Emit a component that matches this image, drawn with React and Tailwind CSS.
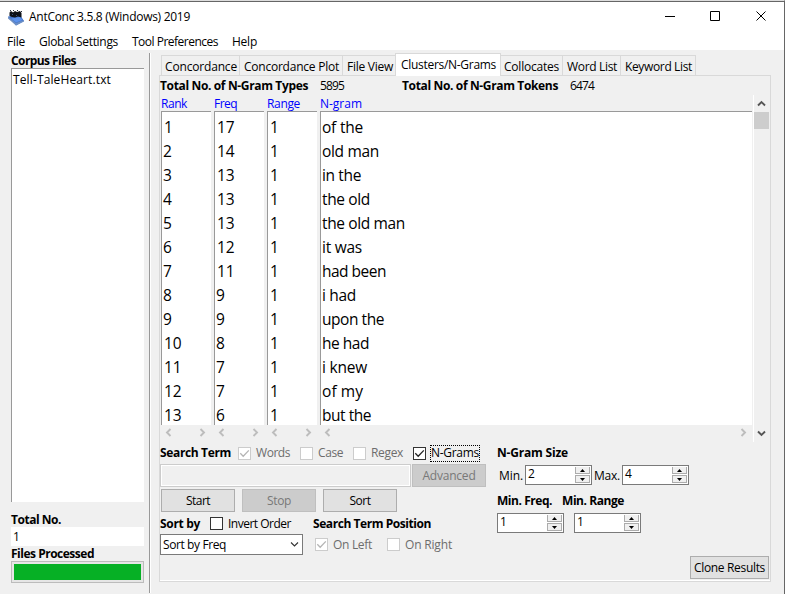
import { useLayoutEffect, useRef, useState } from "react";
import clsx from "clsx";

// Text run that spreads its tracking so that it fills exactly w pixels.
function Text({ w, children, className }) {
  const ref = useRef(null);
  const [tracking, setTracking] = useState(0);
  useLayoutEffect(() => {
    const natural = ref.current.getBoundingClientRect().width;
    setTracking((w - natural) / String(children).length);
  }, []);
  return (
    <span className={clsx("block shrink-0 whitespace-pre", className)} style={{ width: w }}>
      <span ref={ref} className="inline-block" style={{ letterSpacing: tracking }}>
        {children}
      </span>
    </span>
  );
}

function Checkbox({ checked, disabled, className }) {
  return (
    <span
      className={clsx(
        "block h-[13px] w-[13px] shrink-0 border bg-white",
        disabled ? "border-[#cccccc] text-[#b4b4b4]" : "border-[#333333] text-[#222222]",
        className
      )}
    >
      {checked && (
        <svg viewBox="0 0 11 11" className="block h-[11px] w-[11px]" fill="none" stroke="currentColor" strokeWidth="1.3">
          <path d="M1.3 5.3 4.2 8.2 9.8 2.4" />
        </svg>
      )}
    </span>
  );
}

function Button({ children, w, disabled, className }) {
  return (
    <button
      className={clsx(
        "flex h-[23px] shrink-0 items-center justify-center border",
        disabled ? "border-[#bfbfbf] bg-[#cccccc] text-[#787878]" : "border-[#adadad] bg-[#e1e1e1] text-black",
        className
      )}
    >
      <Text w={w}>{children}</Text>
    </button>
  );
}

function Arrow({ up }) {
  return (
    <span className="flex h-[7px] w-[15px] items-center justify-center border border-t-0 border-[#acacac] bg-[#f0f0f0]">
      <svg viewBox="0 0 5 3" className="block h-[3px] w-[5px]">
        <path d={up ? "M0 3 2.5 0 5 3Z" : "M0 0 2.5 3 5 0Z"} fill="#000" />
      </svg>
    </span>
  );
}

function Spinner({ value, className }) {
  return (
    <div className={clsx("flex h-5 w-[67px] shrink-0 justify-between border border-[#7a7a7a] bg-white pl-[2px] pr-px", className)}>
      <span className="leading-4">{value}</span>
      <div className="flex flex-col gap-px pt-px">
        <Arrow up />
        <span className="block border-t border-[#acacac]">
          <Arrow />
        </span>
      </div>
    </div>
  );
}

const chevrons = {
  left: "M6.5 1 3 4.5 6.5 8",
  right: "M2.5 1 6 4.5 2.5 8",
  up: "M1 6.5 4.5 3 8 6.5",
  down: "M1 2.5 4.5 6 8 2.5",
};

function Chevron({ dir, thin, className }) {
  return (
    <svg viewBox="0 0 9 9" className={clsx("block h-[9px] w-[9px] shrink-0", className)} fill="none" stroke="currentColor" strokeWidth={thin ? 1.1 : 1.9}>
      <path d={chevrons[dir]} />
    </svg>
  );
}

const rows = [
  [17, "of the", 41], [14, "old man", 57], [13, "in the", 39], [13, "the old", 48],
  [13, "the old man", 83], [12, "it was", 40], [11, "had been", 64], [9, "i had", 34],
  [9, "upon the", 62], [8, "he had", 47], [7, "i knew", 45], [7, "of my", 41], [6, "but the", 49],
];

function Column({ title, titleW, className, children }) {
  return (
    <div className={clsx("flex shrink-0 flex-col", className)}>
      <Text w={titleW} className="h-4 pt-px leading-4 text-[#0000ff]">{title}</Text>
      <div className="h-[314px] border-l border-t border-[#999999] bg-white pl-px pt-[3px] text-[15.5px] leading-6">
        {children}
      </div>
      <div className="flex h-4 items-center justify-between pb-px pl-[3px] pr-1 text-[#bdbdbd]">
        <Chevron dir="left" />
        <Chevron dir="right" />
      </div>
    </div>
  );
}

function Num({ n }) {
  const s = String(n);
  return <Text w={s.length * 8.8} className={s[0] === "1" ? "pl-px" : ""}>{s}</Text>;
}

function AppIcon() {
  return (
    <svg viewBox="0 0 17 17" className="block h-[17px] w-[17px]">
      <path d="M1 7.5 13 6 17 12 9 16.5Z" fill="#3f73cc" />
      <path d="M1 7.5 9 14 17 11V12.5L9 16.5 1 9.5Z" fill="#6d8fc4" />
      <path d="M4 9.5 13 8 15.5 11 9 13.5Z" fill="#5d92ea" />
      <path d="M2.5 3.5 4 2 6 3.5 8 2 10 3 13 2 14.5 4V8.5L11 7.5 8 8.5 5 8 2.5 7Z" fill="#0d1118" />
      <path d="M3 1h1v1H3zM6 1h1v1H6zM10 1h1v1h-1zM14 2h1v1h-1z" fill="#27303d" />
      <path d="M5 5h1v1H5zM9 6h1v1H9z" fill="#3d5078" />
    </svg>
  );
}

function TitleBar() {
  return (
    <header className="h-12 shrink-0 bg-white">
      <div className="flex h-[30px] items-center pl-[7px]">
        <AppIcon />
        <Text w={161} className="ml-[5px]">AntConc 3.5.8 (Windows) 2019</Text>
        <svg viewBox="0 0 102 11" className="ml-[475px] block h-[11px] w-[102px] -translate-y-px" fill="none" stroke="#000">
          <path d="M0 5.5H10M45.5.5H54.5V9.5H45.5ZM91.5.5 100.5 9.5M100.5.5 91.5 9.5" />
        </svg>
      </div>
      <nav className="flex h-[18px] items-center pl-[7px] pt-px">
        <Text w={18}>File</Text>
        <Text w={79} className="ml-[14px]">Global Settings</Text>
        <Text w={86} className="ml-[14px]">Tool Preferences</Text>
        <Text w={25} className="ml-[14px]">Help</Text>
      </nav>
    </header>
  );
}

function Sidebar() {
  return (
    <aside className="flex w-[149px] shrink-0 flex-col pl-[11px] pr-[5px]">
      <Text w={65} className="mt-[3px] h-[15px] font-bold leading-4">Corpus Files</Text>
      <div className="h-[434px] border-l border-t border-[#999999] bg-white pl-px pt-[3px]">
        <Text w={98}>Tell-TaleHeart.txt</Text>
      </div>
      <Text w={50} className="mt-[10px] h-[15px] font-bold">Total No.</Text>
      <div className="h-[19px] bg-white pl-[2px] leading-[19px]">1</div>
      <Text w={83} className="h-[15px] font-bold leading-[15px]">Files Processed</Text>
      <div className="h-[22px] border border-[#bcbcbc] bg-[#e6e6e6] p-[2px]">
        <div className="h-4 bg-[#06b025]" />
      </div>
    </aside>
  );
}

const tabs = [
  ["Concordance", 72, "w-[78px] pl-[3px]"],
  ["Concordance Plot", 95, "w-[103px] pl-1"],
  ["File View", 46, "w-[53px] pl-1"],
  ["Clusters/N-Grams", 95, "w-[106px] pl-[5px]"],
  ["Collocates", 55, "w-[61px] pl-[3px]"],
  ["Word List", 50, "w-[58px] pl-1"],
  ["Keyword List", 67, "w-[76px] pl-1 border-r"],
];

function Tabs() {
  return (
    <div className="flex h-[22px] items-end pl-[2px]">
      {tabs.map(([name, w, cls]) =>
        name === "Clusters/N-Grams" ? (
          <div key={name} className={clsx("z-10 -mb-px h-[23px] shrink-0 border-x border-t border-[#d9d9d9] bg-white leading-[22px]", cls)}>
            <Text w={w}>{name}</Text>
          </div>
        ) : (
          <div key={name} className={clsx("h-5 shrink-0 border-t border-[#d9d9d9] leading-[21px]", cls, name !== "Collocates" && "border-l")}>
            <Text w={w}>{name}</Text>
          </div>
        )
      )}
    </div>
  );
}

function Results() {
  return (
    <>
      <div className="flex h-[19px] items-center">
        <Text w={148} className="font-bold">Total No. of N-Gram Types</Text>
        <Text w={24} className="ml-3">5895</Text>
        <Text w={156} className="ml-[58px] font-bold">Total No. of N-Gram Tokens</Text>
        <Text w={24} className="ml-3">6474</Text>
      </div>
      <div className="flex h-[347px] pl-px">
        <Column title="Rank" titleW={26} className="mr-[3px] w-[50px]">
          {rows.map((_, i) => <Num key={i} n={i + 1} />)}
        </Column>
        <Column title="Freq" titleW={23} className="mr-[3px] w-[50px]">
          {rows.map((r, i) => <Num key={i} n={r[0]} />)}
        </Column>
        <Column title="Range" titleW={33} className="mr-[3px] w-[50px]">
          {rows.map((_, i) => <Num key={i} n={1} />)}
        </Column>
        <Column title="N-gram" titleW={42} className="w-[432px]">
          {rows.map((r, i) => <Text key={i} w={r[2]}>{r[1]}</Text>)}
        </Column>
        <div className="ml-px flex w-4 flex-col items-center border-l border-white text-[#555555]">
          <Chevron dir="up" className="mt-1" />
          <div className="mt-1 h-[17px] w-[15px] bg-[#cdcdcd]" />
          <Chevron dir="down" className="mb-1 mt-auto" />
        </div>
      </div>
    </>
  );
}

function LeftControls() {
  return (
    <div className="w-[326px] shrink-0">
      <div className="flex h-[22px] items-center">
        <Text w={71} className="font-bold">Search Term</Text>
        <Checkbox checked disabled className="ml-[7px]" />
        <Text w={34} className="ml-[5px] text-[#6d6d6d]">Words</Text>
        <Checkbox disabled className="ml-[10px]" />
        <Text w={25} className="ml-[5px] text-[#6d6d6d]">Case</Text>
        <Checkbox disabled className="ml-[10px]" />
        <Text w={32} className="ml-[5px] text-[#6d6d6d]">Regex</Text>
        <Checkbox checked className="ml-[10px]" />
        <span className="ml-1 flex h-[17px] w-[50px] items-center border border-dotted border-black">
          <Text w={48}>N-Grams</Text>
        </span>
      </div>
      <div className="flex">
        <div className="mr-px h-[23px] w-[251px] border border-[#cccccc] bg-[#f0f0f0] ring-1 ring-inset ring-white" />
        <Button w={53} disabled className="w-[74px]">Advanced</Button>
      </div>
      <div className="mt-[2px] flex gap-[7px] pl-px">
        <Button w={24} className="w-[74px]">Start</Button>
        <Button w={24} disabled className="w-[74px]">Stop</Button>
        <Button w={21} className="w-[74px]">Sort</Button>
      </div>
      <div className="flex h-[22px] items-center pt-px">
        <Text w={40} className="font-bold">Sort by</Text>
        <Checkbox className="ml-[10px]" />
        <Text w={63} className="ml-[5px]">Invert Order</Text>
        <Text w={118} className="ml-[22px] font-bold">Search Term Position</Text>
      </div>
      <div className="flex h-[21px] items-center">
        <div className="flex h-[21px] w-[143px] items-center justify-between border border-[#7a7a7a] bg-white pl-[2px] pr-[3px]">
          <Text w={63}>Sort by Freq</Text>
          <Chevron dir="down" thin className="text-[#333333]" />
        </div>
        <Checkbox checked disabled className="ml-3" />
        <Text w={39} className="ml-[5px] text-[#6d6d6d]">On Left</Text>
        <Checkbox disabled className="ml-[15px]" />
        <Text w={47} className="ml-[5px] text-[#6d6d6d]">On Right</Text>
      </div>
    </div>
  );
}

function RightControls() {
  return (
    <div className="ml-[11px] flex w-[272px] flex-col">
      <div className="flex h-[22px] items-center">
        <Text w={71} className="font-bold">N-Gram Size</Text>
      </div>
      <div className="mt-px flex h-5 items-center">
        <Text w={24} className="ml-[2px] pt-[2px]">Min.</Text>
        <Spinner value="2" className="ml-[2px]" />
        <Text w={26} className="ml-[2px] pt-[2px]">Max.</Text>
        <Spinner value="4" className="ml-[2px]" />
      </div>
      <div className="mt-[7px] flex h-[18px] items-center">
        <Text w={55} className="font-bold">Min. Freq.</Text>
        <Text w={62} className="ml-[10px] font-bold">Min. Range</Text>
      </div>
      <div className="mt-[3px] flex gap-[10px]">
        <Spinner value="1" />
        <Spinner value="1" />
      </div>
      <Button w={71} className="mt-[23px] w-[79px] self-end">Clone Results</Button>
    </div>
  );
}

export default function App() {
  return (
    <div className="flex h-[594px] w-[785px] flex-col overflow-hidden border-r border-t border-r-[#666666] border-t-[#dddddd] bg-[#f0f0f0] font-['Open_Sans','Noto_Sans',sans-serif] text-xs text-black">
      <div className="h-px shrink-0 bg-[#666666]" />
      <TitleBar />
      <div className="flex flex-1">
        <Sidebar />
        <div className="mt-[3px] h-[540px] w-[2px] shrink-0 border-l border-r border-l-[#999999] border-r-white" />
        <main className="ml-2 mt-[3px] w-[612px] shrink-0">
          <Tabs />
          <section className="h-[507px] border border-[#d9d9d9] shadow-[inset_0_-1px_0_#fff]">
            <Results />
            <div className="flex">
              <LeftControls />
              <RightControls />
            </div>
          </section>
        </main>
      </div>
    </div>
  );
}
